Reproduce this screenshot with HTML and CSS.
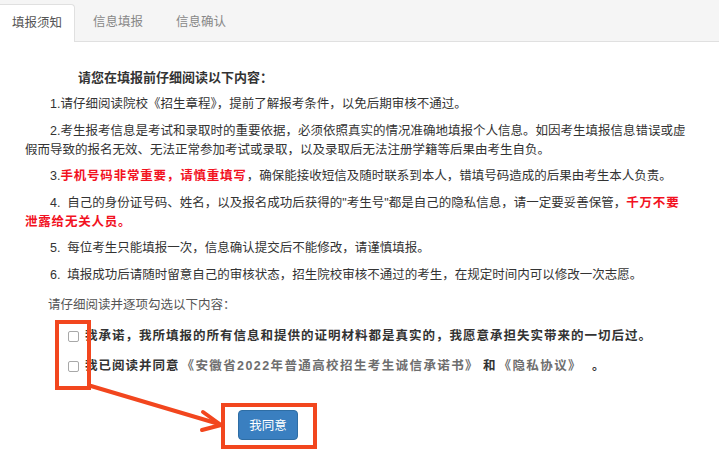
FILE: index.html
```
<!DOCTYPE html>
<html lang="zh-CN">
<head>
<meta charset="utf-8">
<title>填报须知</title>
<link rel="stylesheet" href="styles.css">
</head>
<body>
<div class="tabs">
  <div class="tab active">填报须知</div>
  <div class="tab">信息填报</div>
  <div class="tab">信息确认</div>
</div>
<main class="notice">
  <h2 class="title">请您在填报前仔细阅读以下内容：</h2>
  <p>1.请仔细阅读院校《招生章程》，提前了解报考条件，以免后期审核不通过。</p>
  <p>2.考生报考信息是考试和录取时的重要依据，必须依照真实的情况准确地填报个人信息。如因考生填报信息错误或虚假而导致的报名无效、无法正常参加考试或录取，以及录取后无法注册学籍等后果由考生自负。</p>
  <p>3.<strong class="red">手机号码非常重要，请慎重填写</strong>，确保能接收短信及随时联系到本人，错填号码造成的后果由考生本人负责。</p>
  <p>4.&nbsp; 自己的身份证号码、姓名，以及报名成功后获得的"考生号"都是自己的隐私信息，请一定要妥善保管，<strong class="red">千万不要泄露给无关人员。</strong></p>
  <p>5.&nbsp; 每位考生只能填报一次，信息确认提交后不能修改，请谨慎填报。</p>
  <p>6.&nbsp; 填报成功后请随时留意自己的审核状态，招生院校审核不通过的考生，在规定时间内可以修改一次志愿。</p>
  <p class="ask">请仔细阅读并逐项勾选以下内容：</p>
  <label class="check"><span class="box"></span><b>我承诺，我所填报的所有信息和提供的证明材料都是真实的，我愿意承担失实带来的一切后过。</b></label>
  <label class="check"><span class="box"></span><b>我已阅读并同意</b><span class="link">《安徽省2022年普通高校招生考生诚信承诺书》</span><b>和</b><span class="link">《隐私协议》</span><b class="dot">。</b></label>
  <div class="actions"><button class="btn" type="button">我同意</button></div>
</main>
<svg class="marks" width="719" height="449" viewBox="0 0 719 449">
  <rect x="57" y="322" width="32" height="66" fill="none" stroke="#f2461e" stroke-width="4"/>
  <rect x="223" y="405" width="92" height="42" fill="none" stroke="#f2461e" stroke-width="4"/>
  <path d="M91 386 L219 424" fill="none" stroke="#f2461e" stroke-width="4" stroke-linecap="round"/>
  <path d="M203 412 L221 425 L202 430" fill="none" stroke="#f2461e" stroke-width="4" stroke-linecap="round" stroke-linejoin="round"/>
</svg>
</body>
</html>
```
FILE: styles.css
```
* { box-sizing: border-box; }
html, body { margin: 0; padding: 0; background: #fff; }
body {
  position: relative;
  width: 719px;
  height: 449px;
  overflow: hidden;
  font-family: "Liberation Sans", "Noto Sans CJK SC", sans-serif;
  color: #333;
}
.tabs {
  display: flex;
  align-items: flex-end;
  height: 42px;
  background: #f5f5f5;
  border-bottom: 1px solid #e0e0e0;
}
.tab {
  height: 37px;
  line-height: 37px;
  padding: 0 15px;
  font-size: 12.5px;
  color: #888;
  margin-left: 3px;
}
.tab.active {
  margin-left: 0;
  margin-bottom: -1px;
  height: 38px;
  padding: 0 12px;
  background: #fff;
  color: #555;
  border: 1px solid #e0e0e0;
  border-left: none;
  border-bottom: none;
  border-radius: 0 4px 0 0;
}
.notice {
  padding: 26px 0 0 25px;
  width: 692px;
  font-size: 12.5px;
  line-height: 19px;
}
.title {
  margin: 0 0 8px 53px;
  font-size: 13px;
  font-weight: bold;
  line-height: 19px;
  color: #333;
}
.notice p {
  margin: 0 0 7.5px;
  text-indent: 25px;
}
.red { color: #f2121f; font-weight: bold; letter-spacing: 0.8px; }
.notice p.ask {
  margin: 11px 0 12px;
  text-indent: 23px;
  color: #555;
}
.check {
  display: flex;
  align-items: center;
  height: 19px;
  margin: 0 0 11px 43px;
  font-size: 12.5px;
  letter-spacing: 1px;
  color: #333;
}
.box {
  width: 11px;
  height: 11px;
  border: 1px solid #a8a8a8;
  border-radius: 2px;
  background: #fff;
  margin-right: 6px;
  flex: none;
}
.link {
  font-weight: bold;
  color: #6e6e6e;
  letter-spacing: 1.4px;
  margin: 0 4px 0 2px;
}
.dot { margin-left: 6px; }
.actions {
  padding: 23px 0 0 213px;
}
.btn {
  width: 60px;
  height: 30px;
  border: 1px solid #2e6da4;
  border-radius: 4px;
  background: #3a7fc0;
  color: #fff;
  font-family: "Liberation Sans", "Noto Sans CJK SC", sans-serif;
  font-size: 12.5px;
  padding: 0;
}
.marks {
  position: absolute;
  top: 0;
  left: 0;
  pointer-events: none;
}
```
